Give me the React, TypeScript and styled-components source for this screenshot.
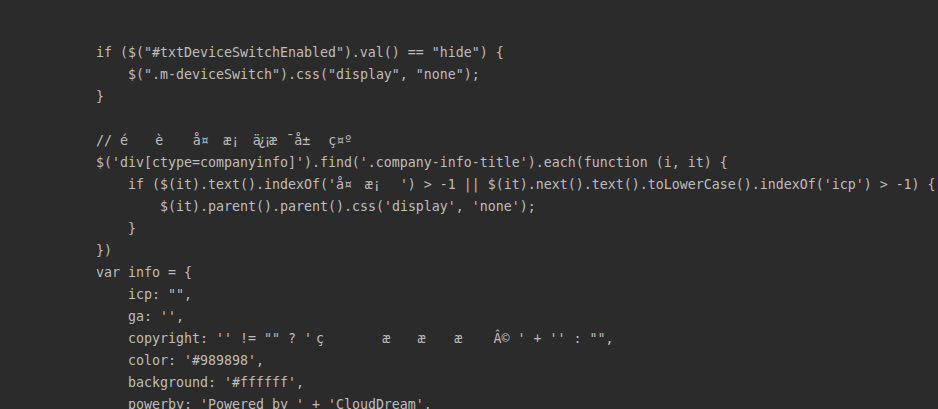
import React from "react";
import styled, { createGlobalStyle } from "styled-components";

const Global = createGlobalStyle`
  html, body { margin: 0; padding: 0; background: #2b2b2b; }
  body { width: 938px; height: 409px; overflow: hidden; }
`;

const Editor = styled.main`
  box-sizing: border-box;
  width: 938px;
  height: 409px;
  overflow: hidden;
  background: #2b2b2b;
  padding: 42px 0 0 96px;
  font-family: "DejaVu Sans Mono", "Liberation Mono", monospace;
  font-size: 13.29px;
  line-height: 22px;
  color: #bdbdbd;
`;

const Line = styled.div<{ $indent?: number }>`
  height: 22px;
  white-space: pre;
  padding-left: ${(p) => (p.$indent ?? 0) * 32}px;
`;

const Pad = styled.span<{ $ch: number }>`
  display: inline-block;
  width: ${(p) => p.$ch * 8}px;
`;

const Narrow = styled.span`
  letter-spacing: -2.6px;
`;

export default function App() {
  return (
    <>
      <Global />
      <Editor>
        <Line>{`if ($("#txtDeviceSwitchEnabled").val() == "hide") {`}</Line>
        <Line $indent={1}>{`$(".m-deviceSwitch").css("display", "none");`}</Line>
        <Line>{`}`}</Line>
        <Line />
        <Line>
          {`// é`}
          <Pad $ch={3.4} />
          {`è`}
          <Pad $ch={3.7} />
          {`å¤`}
          <Pad $ch={1.8} />
          {`æ¡`}
          <Pad $ch={1.7} />
          <Narrow>{`ä¿¡æ`}</Narrow>
          <Pad $ch={1.5} />
          {`¯å±`}
          <Pad $ch={2.25} />
          {`ç¤º`}
        </Line>
        <Line>{`$('div[ctype=companyinfo]').find('.company-info-title').each(function (i, it) {`}</Line>
        <Line $indent={1}>
          {`if ($(it).text().indexOf('å¤`}
          <Pad $ch={1.6} />
          {`æ¡`}
          <Pad $ch={2.4} />
          {`') > -1 || $(it).next().text().toLowerCase().indexOf('icp') > -1) {`}
        </Line>
        <Line $indent={2}>{`$(it).parent().parent().css('display', 'none');`}</Line>
        <Line $indent={1}>{`}`}</Line>
        <Line>{`})`}</Line>
        <Line>{`var info = {`}</Line>
        <Line $indent={1}>{`icp: "",`}</Line>
        <Line $indent={1}>{`ga: '',`}</Line>
        <Line $indent={1}>
          {`copyright: '' != "" ? '`}
          <Pad $ch={0.5} />
          {`ç`}
          <Pad $ch={7.3} />
          {`æ`}
          <Pad $ch={3.4} />
          {`æ`}
          <Pad $ch={3.6} />
          {`æ`}
          <Pad $ch={3.9} />
          {`Â© ' + '' : "",`}
        </Line>
        <Line $indent={1}>{`color: '#989898',`}</Line>
        <Line $indent={1}>{`background: '#ffffff',`}</Line>
        <Line $indent={1}>{`powerby: 'Powered by ' + 'CloudDream',`}</Line>
      </Editor>
    </>
  );
}
